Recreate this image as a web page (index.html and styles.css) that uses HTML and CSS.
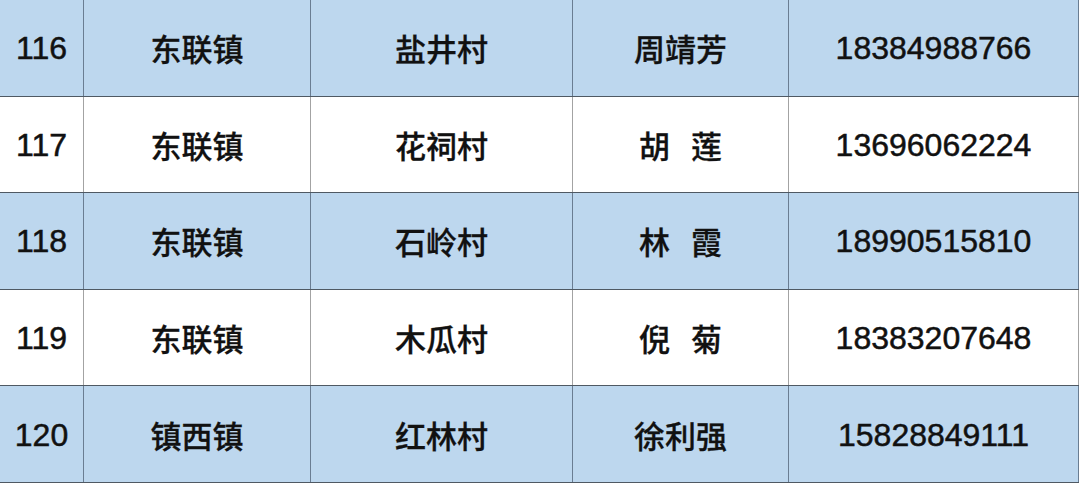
FILE: index.html
```html
<!DOCTYPE html>
<html lang="zh-CN">
<head>
<meta charset="utf-8">
<title>名单</title>
<link rel="stylesheet" href="styles.css">
</head>
<body>
<div class="table">
  <div class="row blue">
    <div class="cell num">116</div><div class="cell">东联镇</div><div class="cell">盐井村</div><div class="cell">周靖芳</div><div class="cell num">18384988766</div>
  </div>
  <div class="row white">
    <div class="cell num">117</div><div class="cell">东联镇</div><div class="cell">花祠村</div><div class="cell">胡 莲</div><div class="cell num">13696062224</div>
  </div>
  <div class="row blue">
    <div class="cell num">118</div><div class="cell">东联镇</div><div class="cell">石岭村</div><div class="cell">林 霞</div><div class="cell num">18990515810</div>
  </div>
  <div class="row white">
    <div class="cell num">119</div><div class="cell">东联镇</div><div class="cell">木瓜村</div><div class="cell">倪 菊</div><div class="cell num">18383207648</div>
  </div>
  <div class="row blue">
    <div class="cell num">120</div><div class="cell">镇西镇</div><div class="cell">红林村</div><div class="cell">徐利强</div><div class="cell num">15828849111</div>
  </div>
</div>
</body>
</html>
```
FILE: styles.css
```css
html, body {
  margin: 0;
  padding: 0;
  background: #ffffff;
}
body {
  width: 1080px;
  height: 483px;
  overflow: hidden;
}
.table {
  width: 1079px;
  height: 483px;
  display: grid;
  grid-template-rows: repeat(5, 1fr);
}
.row {
  display: grid;
  grid-template-columns: 84px 227px 262px 216px 290px;
  border-bottom: 1px solid #4f5963;
}
.row.blue {
  background: #bdd7ee;
}
.row.white {
  background: #ffffff;
}
.cell {
  display: flex;
  align-items: center;
  justify-content: center;
  border-right: 1px solid #6a7d92;
  font-family: "Noto Sans CJK SC", "Liberation Sans", sans-serif;
  font-weight: 500;
  font-size: 31px;
  color: #111111;
  white-space: pre;
  word-spacing: 14px;
  -webkit-text-stroke: 0.3px #111111;
}
.row.white .cell {
  border-right-color: #a3a3a3;
}
.cell.num {
  font-family: "Liberation Sans", Arial, sans-serif;
  font-weight: 400;
  font-size: 32px;
  word-spacing: 0;
  padding-top: 2px;
  -webkit-text-stroke: 0.5px #111111;
}
```
